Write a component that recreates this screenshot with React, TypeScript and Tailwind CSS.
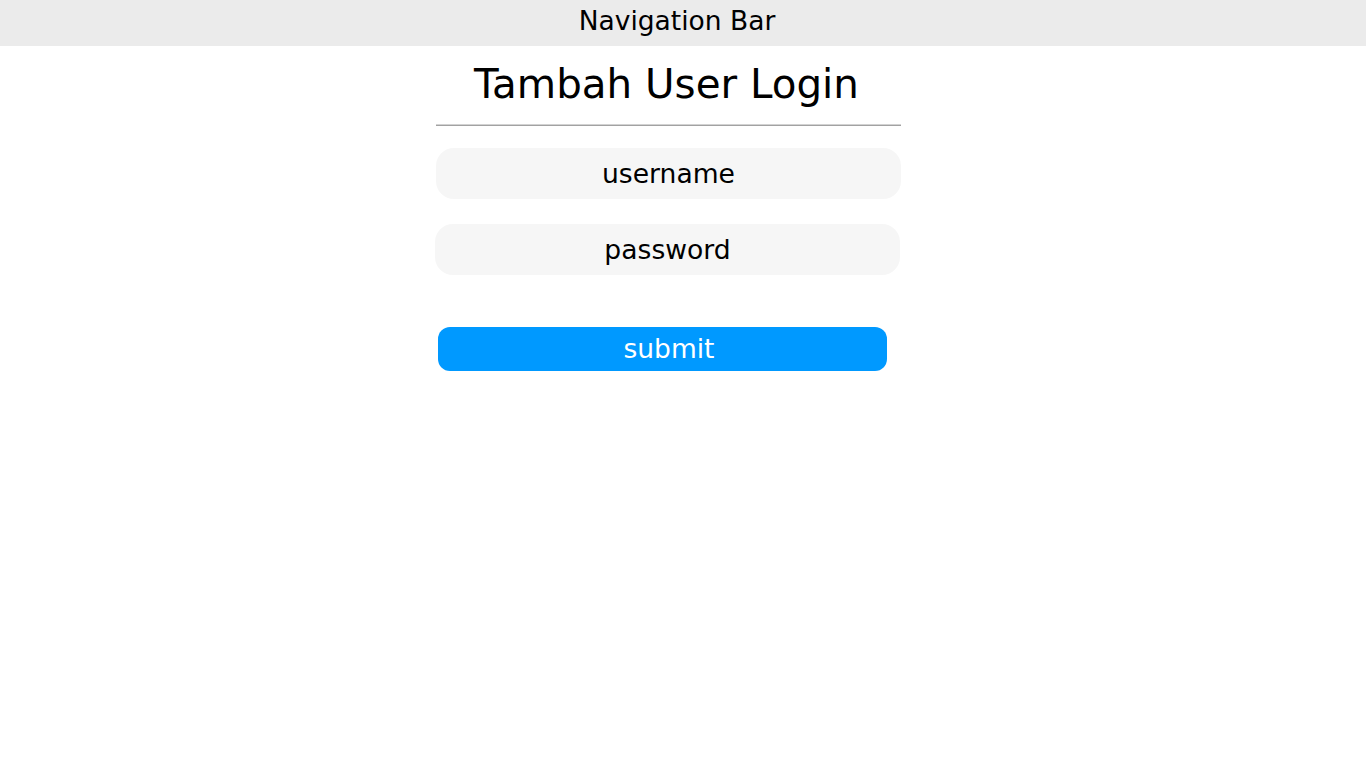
import React from "react";

export default function App() {
  return (
    <div className="min-h-screen bg-white font-['DejaVu_Sans',sans-serif] text-black">
      {/* Navbar */}
      <div className="flex h-[46px] items-center justify-center bg-[#ebebeb] pr-[12px]">
        <span className="-mt-[3px] text-[26.5px] leading-none">Navigation Bar</span>
      </div>

      {/* Form */}
      <div className="flex justify-center pr-[29px]">
        <div className="flex w-[465px] flex-col">
          <h1 className="mt-[15px] pr-[4px] text-center text-[40.4px] leading-[47px]">
            Tambah User Login
          </h1>
          <div className="mt-[16px]">
            <div className="h-px bg-[#d2d2d2]" />
            <div className="h-px bg-[#a2a2a2]" />
          </div>

          <input
            type="text"
            placeholder="username"
            className="mt-[22px] h-[51px] w-full rounded-[18px] bg-[#f6f6f6] text-center text-[26.6px] outline-none placeholder:text-black"
          />
          <input
            type="password"
            placeholder="password"
            className="mt-[25px] -ml-px h-[51px] w-full rounded-[18px] bg-[#f6f6f6] text-center text-[26.6px] outline-none placeholder:text-black"
          />

          <button className="mt-[52px] ml-[2px] h-[44px] w-[449px] rounded-[12px] bg-[#0099ff] pl-[13px] text-[26.5px] leading-none text-white">
            submit
          </button>
        </div>
      </div>
    </div>
  );
}
